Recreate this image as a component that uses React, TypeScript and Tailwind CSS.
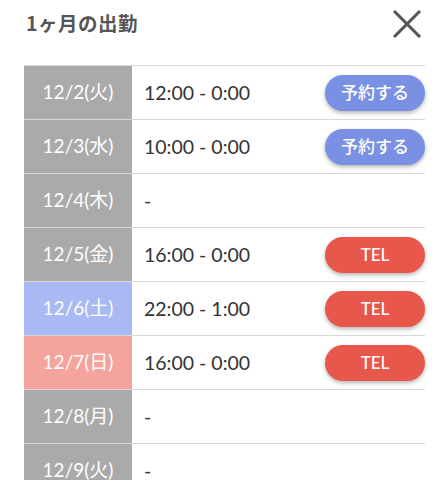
import React from "react";

type Row = {
    date: string;
    time: string;
    kind: "weekday" | "sat" | "sun";
    action?: "reserve" | "tel";
};

const rows: Row[] = [
    { date: "12/2(火)", time: "12:00 - 0:00", kind: "weekday", action: "reserve" },
    { date: "12/3(水)", time: "10:00 - 0:00", kind: "weekday", action: "reserve" },
    { date: "12/4(木)", time: "-", kind: "weekday" },
    { date: "12/5(金)", time: "16:00 - 0:00", kind: "weekday", action: "tel" },
    { date: "12/6(土)", time: "22:00 - 1:00", kind: "sat", action: "tel" },
    { date: "12/7(日)", time: "16:00 - 0:00", kind: "sun", action: "tel" },
    { date: "12/8(月)", time: "-", kind: "weekday" },
    { date: "12/9(火)", time: "-", kind: "weekday" },
];

const dateBg = {
    weekday: "bg-[#aaaaaa]",
    sat: "bg-[#a9b9f3]",
    sun: "bg-[#f4a39d]",
};

export default function App() {
    return (
        <div
            className="w-[448px] h-[480px] overflow-hidden bg-white"
            style={{ fontFamily: 'Lato, "Noto Sans CJK JP", sans-serif' }}
        >
            {/* Header */}
            <div className="h-[65px] flex items-start justify-between pl-[26px] pr-[26px]">
                <h1
                    className="mt-[8px] text-[19.5px] font-bold text-[#555555] tracking-wide"
                    style={{ fontFamily: '"Noto Sans CJK JP", sans-serif' }}
                >
                    1ヶ月の出勤
                </h1>
                <button className="mt-[10px] w-[30px] h-[28px] flex items-center justify-center">
                    <svg width="30" height="28" viewBox="0 0 30 28">
                        <path d="M2 1 L28 27 M28 1 L2 27" stroke="#555555" strokeWidth="3" />
                    </svg>
                </button>
            </div>

            {/* Schedule */}
            <div className="ml-6 w-[401px] border-t border-[#d8d8d8]">
                {rows.map((row) => (
                    <div key={row.date} className="flex h-[54px] border-b border-[#d8d8d8]">
                        <div
                            className={`w-[108px] flex items-center justify-center text-white text-[19px] ${dateBg[row.kind]}`}
                        >
                            {row.date}
                        </div>
                        <div className="flex-1 flex items-center justify-between pl-3">
                            <span className="text-[19.5px] text-[#333333]">{row.time}</span>
                            {row.action === "reserve" && (
                                <button className="w-[100px] h-9 rounded-full bg-[#7a90e2] text-white text-[17px] font-medium shadow-[0_2px_4px_rgba(0,0,0,0.3)]">
                                    予約する
                                </button>
                            )}
                            {row.action === "tel" && (
                                <button className="w-[100px] h-9 rounded-full bg-[#e8574b] text-white text-[17px] font-medium shadow-[0_2px_4px_rgba(0,0,0,0.3)]">
                                    TEL
                                </button>
                            )}
                        </div>
                    </div>
                ))}
            </div>
        </div>
    );
}
